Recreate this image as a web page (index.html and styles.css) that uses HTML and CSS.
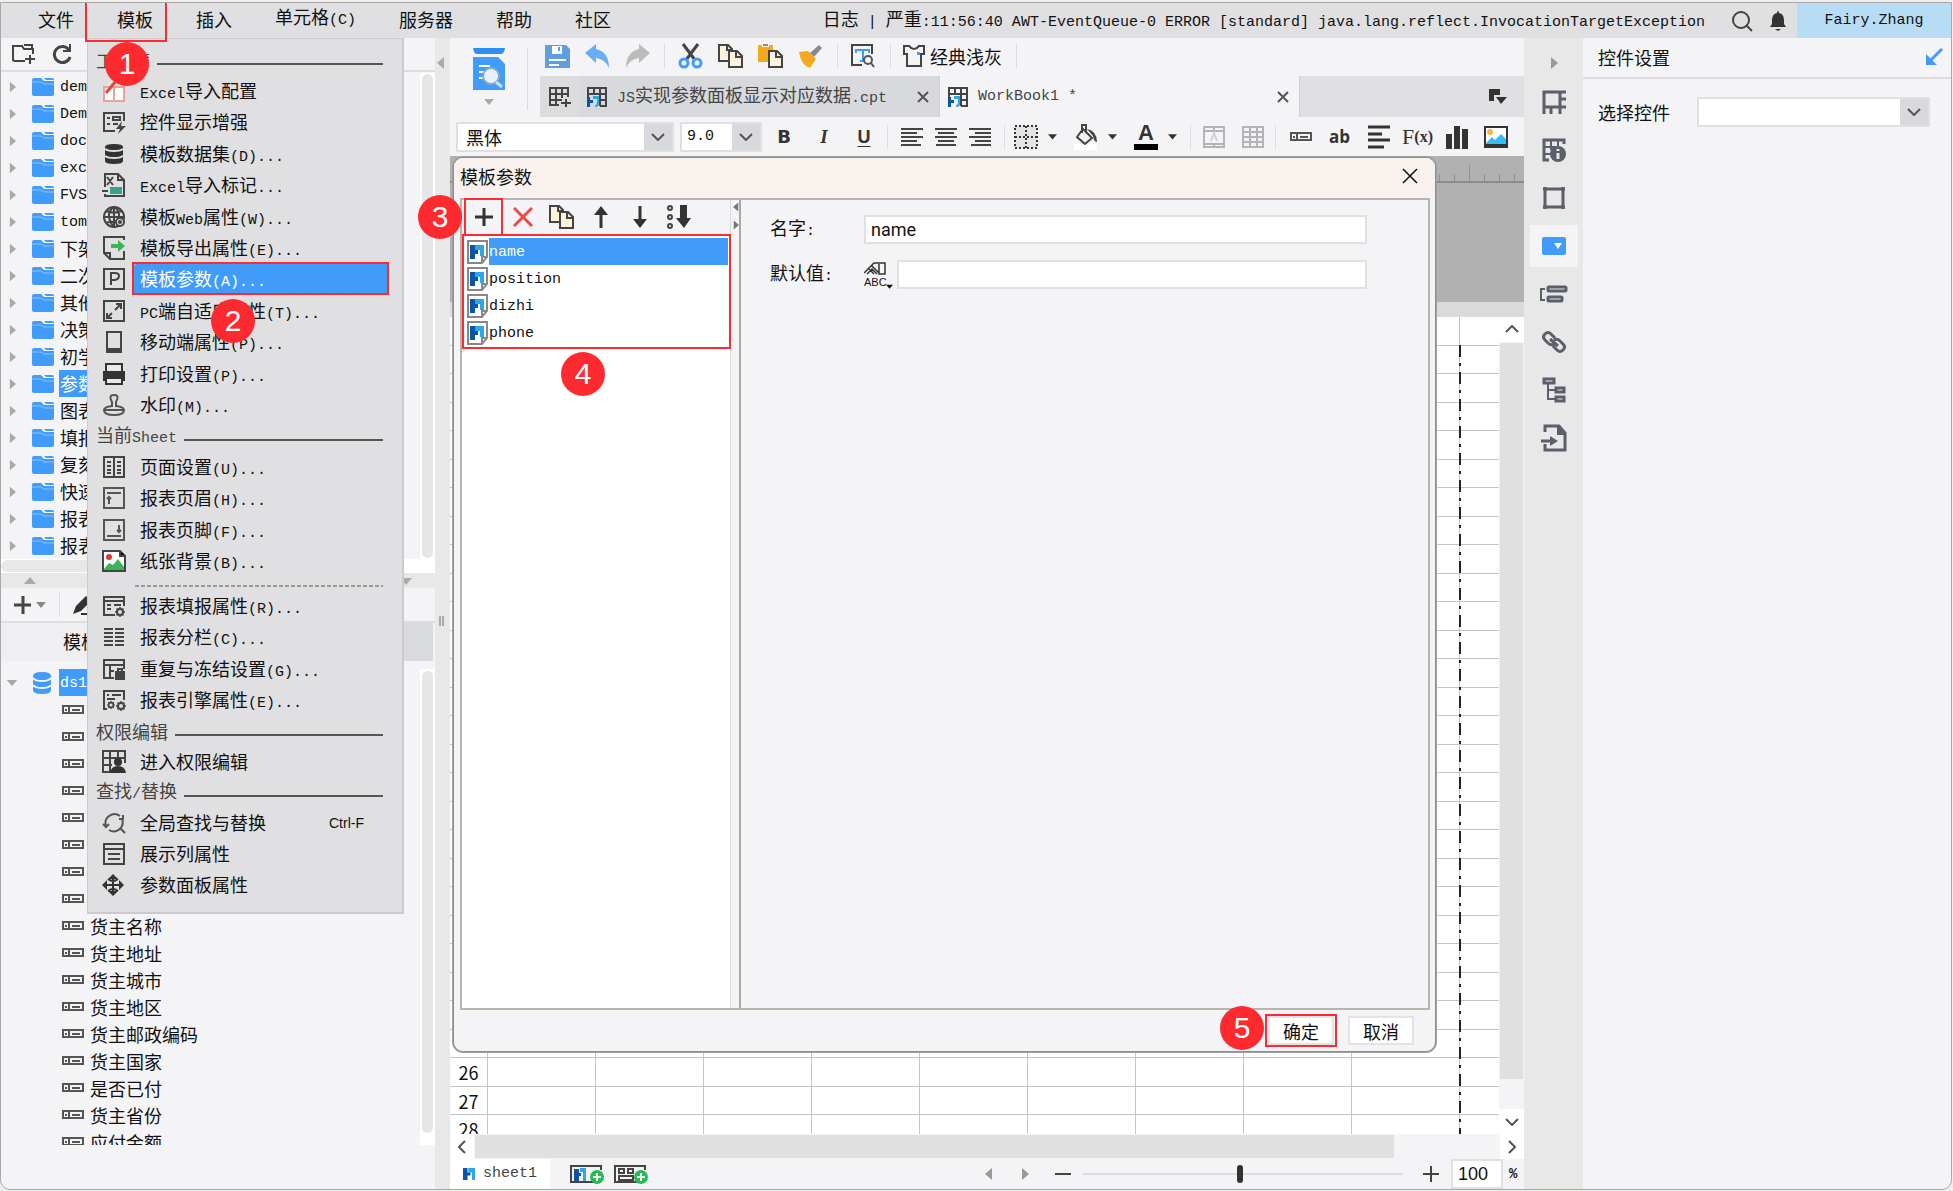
FILE: index.html
```html
<!DOCTYPE html>
<html lang="zh-CN">
<head>
<meta charset="utf-8">
<title>报表设计器</title>
<link rel="stylesheet" href="styles.css">
</head>
<body>
<svg class="defs" aria-hidden="true">
  <symbol id="tri-r" viewBox="0 0 8 12"><path d="M1 0l7 6-7 6z" fill="currentColor"/></symbol>
  <symbol id="tri-d" viewBox="0 0 12 8"><path d="M0 1h12L6 8z" fill="currentColor"/></symbol>
  <symbol id="chev" viewBox="0 0 14 8"><path d="M1 1l6 6 6-6" fill="none" stroke="#555" stroke-width="2"/></symbol>
  <symbol id="folder" viewBox="0 0 22 18"><path d="M0 2q0-2 2-2h7l3 3h10v13q0 2-2 2H2q-2 0-2-2z" fill="#419bf9"/><path d="M12 0h8q2 0 2 2H14z" fill="#419bf9"/><path d="M0 4h9l3 2h10" fill="none" stroke="#8cc4fc"/></symbol>
  <symbol id="field" viewBox="0 0 22 10"><path d="M1 1h20v7H1zM7 1v7M10 5h8M3 5h2" fill="none" stroke="#555" stroke-width="2"/></symbol>
  <symbol id="pages" viewBox="0 0 25 24"><path d="M1 1h9l4 4v12H1z" fill="#fdf3dc" stroke="#444" stroke-width="2"/><path d="M11 7h8l5 5v11H11z" fill="#fdf3dc" stroke="#444" stroke-width="2"/><path d="M18 7v6h6M9 1v5h5" fill="none" stroke="#444" stroke-width="2"/></symbol>
  <symbol id="logo" viewBox="0 0 16 16"><path d="M0 0h6v6h4v4H6v6H0z" fill="#0a55a5"/><path d="M7 0h9v16h-4V6H7z" fill="#2ea7e6"/></symbol>
  <symbol id="book" viewBox="0 0 20 20"><path d="M1 10V1h18v18h-6M1 7h18M7 1v7M13 1v18M13 13h6" fill="none" stroke="#444" stroke-width="2"/><path d="M0 10h3v3h3v3H3v4H0z" fill="#0a55a5"/><path d="M6 9h6v8q0 3-4 3v-2q2 0 2-2v-4H6z" fill="#2ea7e6"/></symbol>
  <symbol id="param" viewBox="0 0 21 24"><path d="M1 1h19v16l-5 6H1z" fill="#fff" stroke="#888" stroke-width="2"/><path d="M20 17h-5v6" fill="none" stroke="#888" stroke-width="2"/><path d="M3 5h5v5h3v4H8v5H3z" fill="#0a55a5"/><path d="M8 5h9v11h-4v-6H8z" fill="#2ea7e6"/></symbol>
  <symbol id="gear" viewBox="0 0 10 10"><circle cx="5" cy="5" r="3" fill="none" stroke="#444" stroke-width="2"/><path d="M5 0v2M5 8v2M0 5h2M8 5h2M1.500 1.500l1.500 1.500M7 7l1.500 1.500M1.500 8.500L3 7M7 3l1.500-1.500" stroke="#444" stroke-width="1.500"/></symbol>
</svg>
<div class="app">
  <header class="menubar">
    <nav class="menus">
      <button>文件</button><button class="marked current">模板</button><button>插入</button><button><span>单元格<span class="m">(C)</span></span></button><button>服务器</button><button>帮助</button><button>社区</button>
    </nav>
    <p class="log">日志<span class="m"> | </span>严重<span class="m">:11:56:40 AWT-EventQueue-0 ERROR [standard] java.lang.reflect.InvocationTargetException</span></p>
    <button class="tool-search" aria-label="搜索"><svg width="22" height="22" viewBox="0 0 22 22" fill="none" stroke="#444" stroke-width="2"><circle cx="10" cy="10" r="8"/><path d="M15 15l6 6"/></svg></button>
    <button class="tool-bell" aria-label="通知"><svg width="16" height="20" viewBox="0 0 16 20" fill="#333"><path d="M8 0q1 0 1 2 5 1 5 7v4l2 3H0l2-3V9q0-6 5-7 0-2 1-2zM5 18h6l-3 2z"/></svg></button>
    <button class="user m">Fairy.Zhang</button>
  </header>

  <div class="workspace">
    <aside class="left">
      <div class="left-tools">
        <button aria-label="新建文件夹"><svg width="24" height="20" viewBox="0 0 24 20" fill="none" stroke="#444" stroke-width="2"><path d="M13 17H3q-1 0-2-1V2h9l2 3h9v5M12 1h8v4M18 11v9M13 15h10"/></svg></button>
        <button aria-label="刷新"><svg width="20" height="20" viewBox="0 0 20 20" fill="none" stroke="#444" stroke-width="3"><path d="M17 6A8 8 0 1 0 18 13"/><path d="M18 0v7h-7" stroke-width="2"/></svg></button>
      </div>
      <div class="pane files">
        <ul class="tree">
          <li><svg class="arrow"><use href="#tri-r"/></svg><svg class="fold"><use href="#folder"/></svg><span class="lat">dem</span></li>
          <li><svg class="arrow"><use href="#tri-r"/></svg><svg class="fold"><use href="#folder"/></svg><span class="lat">Dem</span></li>
          <li><svg class="arrow"><use href="#tri-r"/></svg><svg class="fold"><use href="#folder"/></svg><span class="lat">doc</span></li>
          <li><svg class="arrow"><use href="#tri-r"/></svg><svg class="fold"><use href="#folder"/></svg><span class="lat">exc</span></li>
          <li><svg class="arrow"><use href="#tri-r"/></svg><svg class="fold"><use href="#folder"/></svg><span class="lat">FVS</span></li>
          <li><svg class="arrow"><use href="#tri-r"/></svg><svg class="fold"><use href="#folder"/></svg><span class="lat">tom</span></li>
          <li><svg class="arrow"><use href="#tri-r"/></svg><svg class="fold"><use href="#folder"/></svg><span>下架</span></li>
          <li><svg class="arrow"><use href="#tri-r"/></svg><svg class="fold"><use href="#folder"/></svg><span>二次</span></li>
          <li><svg class="arrow"><use href="#tri-r"/></svg><svg class="fold"><use href="#folder"/></svg><span>其他</span></li>
          <li><svg class="arrow"><use href="#tri-r"/></svg><svg class="fold"><use href="#folder"/></svg><span>决策</span></li>
          <li><svg class="arrow"><use href="#tri-r"/></svg><svg class="fold"><use href="#folder"/></svg><span>初学</span></li>
          <li><svg class="arrow"><use href="#tri-r"/></svg><svg class="fold"><use href="#folder"/></svg><span class="sel">参数</span></li>
          <li><svg class="arrow"><use href="#tri-r"/></svg><svg class="fold"><use href="#folder"/></svg><span>图表</span></li>
          <li><svg class="arrow"><use href="#tri-r"/></svg><svg class="fold"><use href="#folder"/></svg><span>填报</span></li>
          <li><svg class="arrow"><use href="#tri-r"/></svg><svg class="fold"><use href="#folder"/></svg><span>复刻</span></li>
          <li><svg class="arrow"><use href="#tri-r"/></svg><svg class="fold"><use href="#folder"/></svg><span>快速</span></li>
          <li><svg class="arrow"><use href="#tri-r"/></svg><svg class="fold"><use href="#folder"/></svg><span>报表</span></li>
          <li><svg class="arrow"><use href="#tri-r"/></svg><svg class="fold"><use href="#folder"/></svg><span>报表</span></li>
        </ul>
        <div class="vbar"><i></i></div>
      </div>
      <div class="hbar"><i></i></div>
      <div class="hsplit"><svg class="up"><use href="#tri-d"/></svg><svg><use href="#tri-d"/></svg></div>
      <div class="data-tools">
        <button aria-label="添加"><svg width="32" height="18" viewBox="0 0 32 18"><path d="M0 9h17M9 0v18" stroke="#444" stroke-width="3"/><path d="M22 6h10l-5 6z" fill="#888"/></svg></button>
        <i class="sep"></i>
        <button aria-label="编辑"><svg width="22" height="20" viewBox="0 0 22 20"><path d="M0 19l3-8L13 1l5 5L8 16z" fill="#333"/><path d="M8 19h14" stroke="#333" stroke-width="2"/></svg></button>
      </div>
      <div class="data-tabs"><span>模板</span></div>
      <div class="pane data">
        <ul class="tree">
          <li><svg class="arrow-d"><use href="#tri-d"/></svg><svg class="db" viewBox="0 0 18 22"><path d="M0 4q0-4 9-4t9 4v14q0 4-9 4t-9-4z" fill="#419bf9"/><path d="M0 6q2 3 9 3t9-3M0 13q2 3 9 3t9-3" fill="none" stroke="#f4f4f7" stroke-width="2"/></svg><span class="sel lat">ds1</span></li>
          <li class="col"><svg><use href="#field"/></svg></li>
          <li class="col"><svg><use href="#field"/></svg></li>
          <li class="col"><svg><use href="#field"/></svg></li>
          <li class="col"><svg><use href="#field"/></svg></li>
          <li class="col"><svg><use href="#field"/></svg></li>
          <li class="col"><svg><use href="#field"/></svg></li>
          <li class="col"><svg><use href="#field"/></svg></li>
          <li class="col"><svg><use href="#field"/></svg></li>
          <li class="col"><svg><use href="#field"/></svg>货主名称</li>
          <li class="col"><svg><use href="#field"/></svg>货主地址</li>
          <li class="col"><svg><use href="#field"/></svg>货主城市</li>
          <li class="col"><svg><use href="#field"/></svg>货主地区</li>
          <li class="col"><svg><use href="#field"/></svg>货主邮政编码</li>
          <li class="col"><svg><use href="#field"/></svg>货主国家</li>
          <li class="col"><svg><use href="#field"/></svg>是否已付</li>
          <li class="col"><svg><use href="#field"/></svg>货主省份</li>
          <li class="col"><svg><use href="#field"/></svg>应付金额</li>
        </ul>
        <div class="vbar"><i></i></div>
      </div>
    </aside>

    <div class="vsplit"><svg class="flip" width="8" height="14" viewBox="0 0 8 12"><use href="#tri-r"/></svg><i></i></div>

    <main class="main">
      <div class="top">
        <button class="preview" aria-label="预览"><svg width="34" height="58" viewBox="0 0 34 58"><path d="M1 0h32q-1 6-4 6H5Q2 6 1 0z" fill="#2f8ff0"/><path d="M1 9h25l7 7v26H1z" fill="#419bf9"/><path d="M7 18h11M7 24h6M7 30h5" stroke="#fff" stroke-width="2"/><circle cx="19" cy="28" r="8" fill="#e4f2ff" stroke="#8ab" stroke-width="2"/><path d="M24 34l6 5" stroke="#cde" stroke-width="3"/><path d="M12 51h10l-5 6z" fill="#aaa"/></svg></button>
        <div class="top-rows">
          <div class="tools">
            <button aria-label="保存"><svg width="25" height="25" viewBox="0 0 25 25"><path d="M0 1h21l4 4v19H0z" fill="#5f9fe0"/><path d="M7 2h10v8H7z" fill="#fff"/><path d="M13 3h2v4h-2z" fill="#5f9fe0"/><path d="M4 16h17M4 21h10" stroke="#fff" stroke-width="2"/></svg></button>
            <button aria-label="撤销"><svg width="25" height="24" viewBox="0 0 25 24"><path d="M0 9L11 0v5q13 3 13 19-4-9-13-10v5z" fill="#6aaef5"/></svg></button>
            <button aria-label="重做"><svg width="25" height="24" viewBox="0 0 25 24"><path d="M25 9L14 0v5Q1 8 1 24q4-9 13-10v5z" fill="#bbb"/></svg></button>
            <i class="sep"></i>
            <button aria-label="剪切"><svg width="25" height="26" viewBox="0 0 25 26" fill="none"><path d="M5 1l12 16M20 1L8 17" stroke="#444" stroke-width="3"/><circle cx="6" cy="20" r="4" stroke="#419bf9" stroke-width="3"/><circle cx="19" cy="20" r="4" stroke="#419bf9" stroke-width="3"/></svg></button>
            <button aria-label="复制"><svg width="25" height="24"><use href="#pages"/></svg></button>
            <button aria-label="粘贴"><svg width="25" height="26" viewBox="0 0 25 26"><path d="M0 2h15v17H0z" fill="#f2a91c"/><path d="M4 0h7v4H4z" fill="#fff"/><path d="M5 1h5v2H5z" fill="#e66b2e"/><path d="M11 8h8l5 5v11H11z" fill="#fdf3dc" stroke="#444" stroke-width="2"/><path d="M18 8v6h6" fill="none" stroke="#444" stroke-width="2"/></svg></button>
            <button aria-label="格式刷"><svg width="25" height="24" viewBox="0 0 25 24"><path d="M12 9L21 1l3 3-8 9z" fill="#889"/><path d="M1 8l9-1 8 8-6 9Q3 21 1 8z" fill="#f2a91c"/></svg></button>
            <i class="sep"></i>
            <button aria-label="查看文本"><svg width="24" height="24" viewBox="0 0 24 24" fill="none"><path d="M11 21H1V1h20v9" stroke="#444" stroke-width="2"/><path d="M5 6h13M12 6v12M5 5v4M18 5v4M9 17h4" stroke="#419bf9" stroke-width="2"/><circle cx="17" cy="16" r="4" stroke="#555" stroke-width="2"/><path d="M20 19l3 4" stroke="#555" stroke-width="2"/></svg></button>
            <i class="sep"></i>
            <button class="theme"><svg width="22" height="22" viewBox="0 0 22 22"><path d="M1 1h5q5 6 10 0h5v8h-3v12H4V9H1z" fill="none" stroke="#444" stroke-width="2"/><path d="M14 7h3v3h-3z" fill="#419bf9"/></svg>经典浅灰</button>
            <i class="sep"></i>
          </div>
          <div class="tabs">
            <button class="newtab" aria-label="新建模板"><svg width="22" height="20" viewBox="0 0 22 20" fill="none" stroke="#444" stroke-width="2"><path d="M10 18H1V1h18v9M1 7h18M1 13h12M7 1v17M13 1v10M17 12v8M12 16h10"/></svg></button>
            <div class="tab"><svg width="20" height="20"><use href="#book"/></svg><span class="name"><span class="m">JS</span>实现参数面板显示对应数据<span class="m">.cpt</span></span><button aria-label="关闭"><svg width="12" height="12" viewBox="0 0 12 12"><path d="M1 1l10 10M11 1L1 11" stroke="#555" stroke-width="2"/></svg></button></div>
            <div class="tab active"><svg width="20" height="20"><use href="#book"/></svg><span class="name m">WorkBook1 *</span><button aria-label="关闭"><svg width="12" height="12" viewBox="0 0 12 12"><path d="M1 1l10 10M11 1L1 11" stroke="#555" stroke-width="2"/></svg></button></div>
            <button class="tablist" aria-label="标签列表"><svg width="20" height="16" viewBox="0 0 20 16" fill="#333"><path d="M1 0h11v6H6v6H1zM8 8h11l-6 7z"/></svg></button>
          </div>
        </div>
      </div>

      <div class="format">
        <div class="combo font"><select aria-label="字体"><option>黑体</option></select><svg><use href="#chev"/></svg></div>
        <div class="combo size"><select aria-label="字号" class="m"><option>9.0</option></select><svg><use href="#chev"/></svg></div>
        <div class="group biu"><button class="b">B</button><button class="it">I</button><button class="u">U</button></div>
        <i class="sep"></i>
        <div class="group al">
          <button aria-label="左对齐"><svg width="22" height="18" viewBox="0 0 22 18" stroke="#444" stroke-width="2"><path d="M0 1h22M0 5h16M0 9h22M0 13h16M0 17h20"/></svg></button>
          <button aria-label="居中"><svg width="22" height="18" viewBox="0 0 22 18" stroke="#444" stroke-width="2"><path d="M0 1h22M3 5h16M0 9h22M3 13h16M1 17h20"/></svg></button>
          <button aria-label="右对齐"><svg width="22" height="18" viewBox="0 0 22 18" stroke="#444" stroke-width="2"><path d="M0 1h22M6 5h16M0 9h22M6 13h16M2 17h20"/></svg></button>
        </div>
        <i class="sep"></i>
        <div class="group drops">
          <button aria-label="边框"><svg width="24" height="26" viewBox="0 0 24 26"><path d="M1 2h22v22H1zM12 2v22M1 13h22" fill="#e4e4e6" stroke="#333" stroke-width="2" stroke-dasharray="2 2"/></svg><svg class="caret"><use href="#tri-d"/></svg></button>
          <button aria-label="填充"><svg width="24" height="26" viewBox="0 0 24 26"><path d="M0 20h23v6H0z" fill="#fff"/><path d="M9 5l9 9-7 6-8-7zM8 9V1h4v7" fill="none" stroke="#444" stroke-width="2"/><path d="M13 5q10 2 10 13-3 0-4-6z" fill="#444"/></svg><svg class="caret"><use href="#tri-d"/></svg></button>
          <button aria-label="文字颜色"><span class="fa">A</span><svg class="caret"><use href="#tri-d"/></svg></button>
        </div>
        <i class="sep"></i>
        <div class="group cells">
          <button aria-label="合并单元格"><svg width="22" height="22" viewBox="0 0 22 22" fill="none" stroke="#b4b4b6" stroke-width="2"><path d="M1 1h20v20H1zM1 5h20M1 18h20M11 1v4M11 18v3"/><path d="M8 15l3-8 3 8" stroke="#d0d0d2"/></svg></button>
          <button aria-label="取消合并"><svg width="22" height="22" viewBox="0 0 22 22" fill="none" stroke="#b4b4b6" stroke-width="2"><path d="M1 1h20v20H1zM1 6h20M1 11h20M1 16h20M8 1v20M15 1v20"/></svg></button>
        </div>
        <i class="sep"></i>
        <div class="group cells last">
          <button aria-label="数据列"><svg width="22" height="10"><use href="#field"/></svg></button>
          <button class="ab">ab</button>
          <button aria-label="富文本"><svg width="22" height="24" viewBox="0 0 22 24" stroke="#333" stroke-width="3"><path d="M0 2h22M0 9h14M0 15h22M0 22h16"/></svg></button>
          <button class="fx">F<small>(x)</small></button>
          <button aria-label="图表"><svg width="22" height="24" viewBox="0 0 22 24" fill="#333"><path d="M0 9h6v15H0zM8 1h6v23H8zM16 4h6v20h-6z"/></svg></button>
          <button aria-label="图片"><svg width="24" height="22" viewBox="0 0 24 22"><path d="M1 1h22v20H1z" fill="#fff" stroke="#333" stroke-width="2"/><path d="M2 17l6-6 3 3 6-6 5 5v5H2z" fill="#36bdf5"/><path d="M1 18h22v3H1z" fill="#333"/><circle cx="6" cy="6" r="3" fill="#f6b53c"/></svg></button>
        </div>
      </div>

      <div class="canvas">
        <div class="ruler"></div>
        <div class="param-area"></div>
        <div class="param-edge"></div>
        <div class="sheet-wrap">
          <div class="sheet"><table id="grid"></table><i class="page-edge"></i></div>
          <div class="sheet-bar"><button aria-label="向上" class="flipv"><svg><use href="#chev"/></svg></button><i></i><button aria-label="向下"><svg><use href="#chev"/></svg></button></div>
        </div>

        <section class="dialog" role="dialog" aria-labelledby="dlg-title">
          <div class="dlg-title"><h2 id="dlg-title">模板参数</h2><button aria-label="关闭"><svg width="16" height="16" viewBox="0 0 16 16"><path d="M1 1l14 14M15 1L1 15" stroke="#111" stroke-width="1.500"/></svg></button></div>
          <div class="dlg-body">
            <div class="params">
              <div class="param-tools">
                <button class="marked" aria-label="添加参数"><svg width="18" height="18" viewBox="0 0 18 18"><path d="M0 9h18M9 0v18" stroke="#333" stroke-width="3"/></svg></button>
                <button aria-label="删除参数"><svg width="20" height="20" viewBox="0 0 20 20"><path d="M1 1l18 18M19 1L1 19" stroke="#ee4848" stroke-width="3"/></svg></button>
                <button aria-label="复制参数"><svg width="25" height="24"><use href="#pages"/></svg></button>
                <button aria-label="上移"><svg width="16" height="22" viewBox="0 0 16 22"><path d="M8 22V5" stroke="#333" stroke-width="3"/><path d="M8 0l7 9H1z" fill="#333"/></svg></button>
                <button aria-label="下移"><svg width="16" height="22" viewBox="0 0 16 22"><path d="M8 0v17" stroke="#333" stroke-width="3"/><path d="M8 22l7-9H1z" fill="#333"/></svg></button>
                <button aria-label="排序"><svg width="24" height="24" viewBox="0 0 24 24"><path d="M13 0h7v13h4l-7 10-8-10h4z" fill="#333"/><g fill="none" stroke="#444" stroke-width="2"><circle cx="3" cy="3" r="2"/><circle cx="3" cy="12" r="2"/><circle cx="3" cy="21" r="2"/></g></svg></button>
              </div>
              <div class="param-list">
                <ul class="marked">
                  <li class="on"><svg><use href="#param"/></svg><span>name</span></li>
                  <li><svg><use href="#param"/></svg><span>position</span></li>
                  <li><svg><use href="#param"/></svg><span>dizhi</span></li>
                  <li><svg><use href="#param"/></svg><span>phone</span></li>
                </ul>
                <b class="badge badge-4">4</b>
              </div>
              <b class="badge badge-3">3</b>
            </div>
            <div class="dlg-split"><svg class="flip" viewBox="0 0 8 12"><use href="#tri-r"/></svg><svg viewBox="0 0 8 12"><use href="#tri-r"/></svg></div>
            <form class="detail">
              <label for="p-name">名字<span class="m">:</span></label><input id="p-name" value="name">
              <label for="p-def">默认值<span class="m">:</span></label>
              <div class="def"><button type="button" aria-label="类型"><svg width="22" height="14" viewBox="0 0 22 14" fill="none" stroke="#333" stroke-width="1.500"><path d="M0 11L10 1h11v11h-6V2M3 12l5-5 5 5M8 4l7 7M5 7l5 5"/></svg><span>ABC</span><svg class="mini"><use href="#tri-d"/></svg></button><input id="p-def"></div>
            </form>
          </div>
          <footer><b class="badge">5</b><button class="marked">确定</button><button>取消</button></footer>
        </section>
      </div>

      <div class="sheet-hbar"><button aria-label="向左"><svg class="rot-l"><use href="#chev"/></svg></button><i></i><button aria-label="向右"><svg class="rot-r"><use href="#chev"/></svg></button></div>
      <div class="status">
        <button class="sheet-tab"><svg width="12" height="14" viewBox="0 0 16 16"><use href="#logo"/></svg><span class="m">sheet1</span></button>
        <button aria-label="新建报表"><svg width="34" height="20" viewBox="0 0 34 20"><path d="M25 18H1V2h30v4" fill="none" stroke="#444" stroke-width="2"/><path d="M4 5h5v4h2v3H9v5H4z" fill="#0a55a5"/><path d="M10 4h6v13h-3V8h-3z" fill="#2ea7e6"/><circle cx="27" cy="13" r="7" fill="#25bb55"/><path d="M23 13h8M27 9v8" stroke="#fff" stroke-width="2"/></svg></button>
        <button aria-label="新建聚合块"><svg width="34" height="20" viewBox="0 0 34 20"><path d="M25 18H1V2h30v4M5 5h5v4H5zM14 5h5v4h-5zM5 12h14v4H5z" fill="none" stroke="#444" stroke-width="2"/><circle cx="27" cy="13" r="7" fill="#25bb55"/><path d="M23 13h8M27 9v8" stroke="#fff" stroke-width="2"/></svg></button>
        <span class="grow"></span>
        <button class="pg" aria-label="上一页"><svg class="flip" width="8" height="12"><use href="#tri-r"/></svg></button>
        <button class="pg" aria-label="下一页"><svg width="8" height="12"><use href="#tri-r"/></svg></button>
        <button class="zo" aria-label="缩小"><svg width="16" height="16" viewBox="0 0 16 16"><path d="M0 8h16" stroke="#444" stroke-width="2"/></svg></button>
        <input type="range" aria-label="缩放" min="0" max="100" value="49">
        <button class="zi" aria-label="放大"><svg width="16" height="16" viewBox="0 0 16 16"><path d="M0 8h16M8 0v16" stroke="#444" stroke-width="2"/></svg></button>
        <input class="zoom" id="zoom" value="100"><label for="zoom">%</label>
      </div>
    </main>

    <nav class="strip">
      <button class="fold-btn" aria-label="收起"><svg width="8" height="14"><use href="#tri-r"/></svg></button>
      <button aria-label="单元格元素"><svg width="24" height="24" viewBox="0 0 24 24" fill="none" stroke="#5b5f6b" stroke-width="3"><path d="M2 24V2h22M2 17h22M18 2v22M18 9h6M9 17v7"/></svg></button>
      <button aria-label="单元格属性"><svg width="24" height="24" viewBox="0 0 24 24" fill="none" stroke="#5b5f6b"><path d="M7 22H2V2h20v4" stroke-width="3"/><path d="M3 9h11M3 16h5M9 3v9M16 3v5" stroke-width="2"/><circle cx="16" cy="16" r="8" fill="#5b5f6b" stroke="none"/><path d="M16 15v6M16 11v2" stroke="#e8e8e8" stroke-width="3"/></svg></button>
      <button aria-label="悬浮元素"><svg width="24" height="24" viewBox="0 0 24 24" fill="none" stroke="#5b5f6b" stroke-width="3"><path d="M3 3h18v18H3z"/><path d="M1 3h4M19 3h4M1 21h4M19 21h4M3 1v3M21 1v3M3 20v3M21 20v3"/></svg></button>
      <button class="active" aria-label="控件设置"><svg width="24" height="18" viewBox="0 0 24 18"><rect width="24" height="18" rx="2" fill="#419bf9"/><path d="M12 6h8l-4 6z" fill="#fff"/></svg></button>
      <button aria-label="条件属性"><svg width="28" height="18" viewBox="0 0 28 18" fill="none" stroke="#5b5f6b" stroke-width="3"><rect x="8" y="2" width="18" height="4" rx="1"/><rect x="8" y="12" width="14" height="4" rx="1"/><path d="M5 4H1v11h4" stroke-width="2"/></svg></button>
      <button aria-label="超级链接"><svg width="24" height="24" viewBox="0 0 24 24" fill="none" stroke="#5b5f6b" stroke-width="3"><path d="M13 8L9 4Q6 1 3 4t0 6l3 3q3 3 6 1M11 16l4 4q3 3 6 0t0-6l-3-3q-3-3-6-1M8 9l8 7"/></svg></button>
      <button aria-label="组件结构"><svg width="24" height="26" viewBox="0 0 24 26" fill="none" stroke="#5b5f6b"><path d="M2 2h10v4H2zM14 11h8v4h-8zM14 20h8v4h-8z" stroke-width="3"/><path d="M6 7v15h7M6 13h7" stroke-width="2"/></svg></button>
      <button aria-label="导出"><svg width="28" height="28" viewBox="0 0 28 28"><path d="M5 8V2h14l6 7v17H5v-6" fill="none" stroke="#5b5f6b" stroke-width="3"/><path d="M17 2h3l6 7v2h-9z" fill="#5b5f6b"/><path d="M1 17h11" stroke="#5b5f6b" stroke-width="3"/><path d="M10 12l8 5-8 5z" fill="#5b5f6b"/></svg></button>
    </nav>

    <aside class="right">
      <div class="right-head"><h2>控件设置</h2><button aria-label="停靠"><svg width="18" height="18" viewBox="0 0 18 18"><path d="M17 1L6 12" stroke="#419bf9" stroke-width="3"/><path d="M1 6l11 11H1z" fill="#419bf9"/></svg></button></div>
      <div class="right-row"><label for="widget">选择控件</label><div class="combo"><select id="widget"><option></option></select><svg><use href="#chev"/></svg></div></div>
    </aside>
  </div>

  <div class="popup">
    <h3>工作簿</h3>
    <div class="items g11">
      <button><svg viewBox="0 0 24 24"><path d="M2 8h20v14H2z" fill="#fff" stroke="#e9a19b" stroke-width="2"/><path d="M12 9v12" stroke="#e9a19b" stroke-width="2"/><path d="M4 14L14 2" stroke="#e2483b" stroke-width="3"/></svg><span><span class="m">Excel</span>导入配置</span></button>
      <button><svg viewBox="0 0 24 24" fill="none" stroke="#444" stroke-width="2"><path d="M13 21H2V3h20v8M5 8h3M5 14h3M11 7h7v3h-7zM11 14h5"/><path d="M20 11l-6 8h4l-2 5 8-8h-5z" fill="#444" stroke="none"/></svg><span>控件显示增强</span></button>
      <button><svg viewBox="0 0 24 24"><path d="M3 5q0-3 9-3t9 3v14q0 3-9 3t-9-3z" fill="#333"/><path d="M3 7q3 2 9 2t9-2M3 14q3 2 9 2t9-2" fill="none" stroke="#e0e0e2" stroke-width="2"/></svg><span>模板数据集<span class="m">(D)...</span></span></button>
      <button><svg viewBox="0 0 24 24" fill="none" stroke="#444" stroke-width="2"><path d="M3 14V1h13l6 6v16H3v-2M16 1v6h6M5 4l6 8M11 4l-6 8M0 18h6"/><path d="M9 15h10v5H9z" fill="#35a38b" stroke="#35a38b"/></svg><span><span class="m">Excel</span>导入标记<span class="m">...</span></span></button>
      <button><svg viewBox="0 0 24 24" fill="none" stroke="#444" stroke-width="2"><circle cx="12" cy="12" r="10"/><path d="M2 12h20M12 2v20M4 6q8 3 16 0M4 18q5-2 8-1M12 2q-6 4-5 10t5 10M12 2q6 3 5 10"/><circle cx="18" cy="17" r="4" fill="#e0e0e2"/><circle cx="18" cy="17" r="1"/></svg><span>模板<span class="m">Web</span>属性<span class="m">(W)...</span></span></button>
      <button><svg viewBox="0 0 24 24"><path d="M22 4V1H2v16l6 6h14V15M2 17h6v6" fill="none" stroke="#444" stroke-width="2"/><path d="M9 8h7V4l7 6-7 6v-4H9z" fill="#3bb455"/></svg><span>模板导出属性<span class="m">(E)...</span></span></button>
      <button class="picked"><svg viewBox="0 0 24 24" fill="none" stroke="#444" stroke-width="2"><path d="M2 2h20v20H2zM9 18V6h4q4 0 4 3t-4 4H9"/></svg><span>模板参数<span class="m">(A)...</span></span></button>
      <button><svg viewBox="0 0 24 24" fill="none" stroke="#444" stroke-width="2"><path d="M2 2h20v20H2zM14 5h5v5M19 5l-6 6M10 19H5v-5M5 19l5-5"/></svg><span><span class="m">PC</span>端自适应属性<span class="m">(T)...</span></span></button>
      <button><svg viewBox="0 0 24 24"><path d="M5 2h14v20H5z" fill="none" stroke="#444" stroke-width="2"/><path d="M5 18h14v4H5z" fill="#444"/></svg><span>移动端属性<span class="m">(P)...</span></span></button>
      <button><svg viewBox="0 0 24 24"><path d="M1 9h22v10H1z" fill="#333"/><path d="M4 2h16v8H4zM4 16h16v6H4z" fill="#e8e8ea" stroke="#333" stroke-width="2"/></svg><span>打印设置<span class="m">(P)...</span></span></button>
      <button><svg viewBox="0 0 24 24" fill="none" stroke="#555" stroke-width="2"><path d="M10 13V9q-4-7 2-7t2 7v4q8 1 8 4H2q0-3 8-4zM2 17q0 5 10 5t10-5"/></svg><span>水印<span class="m">(M)...</span></span></button>
    </div>
    <h3><span>当前<span class="m">Sheet</span></span></h3>
    <div class="items g4">
      <button><svg viewBox="0 0 24 24" fill="none" stroke="#444" stroke-width="2"><path d="M2 2h20v20H2zM12 2v20M5 7h4M5 11h4M5 15h4M5 18h4M15 7h4M15 11h4M15 15h4M15 18h4"/></svg><span>页面设置<span class="m">(U)...</span></span></button>
      <button><svg viewBox="0 0 24 24" fill="none" stroke="#555" stroke-width="2"><path d="M2 2h20v20H2zM5 7h14M7 11v7M5 13l2-2 2 2"/></svg><span>报表页眉<span class="m">(H)...</span></span></button>
      <button><svg viewBox="0 0 24 24" fill="none" stroke="#555" stroke-width="2"><path d="M2 2h20v20H2zM5 18h14M17 7v7M15 12l2 2 2-2"/></svg><span>报表页脚<span class="m">(F)...</span></span></button>
      <button><svg viewBox="0 0 24 24"><path d="M1 2h17l5 5v15H1z" fill="#fff" stroke="#444" stroke-width="2"/><path d="M18 2v5h5" stroke="#444" stroke-width="2"/><path d="M2 20l5-6 4 2 5-6 6 8v3H2z" fill="#3bb455"/><circle cx="7" cy="8" r="3" fill="#e8323b"/></svg><span>纸张背景<span class="m">(B)...</span></span></button>
    </div>
    <hr>
    <div class="items g4">
      <button><svg viewBox="0 0 24 24" fill="none" stroke="#444" stroke-width="2"><path d="M13 21H2V3h20v9M2 7h20M5 11h4M5 15h4M12 11h7"/><use href="#gear" x="13" y="13" width="10" height="10"/></svg><span>报表填报属性<span class="m">(R)...</span></span></button>
      <button><svg viewBox="0 0 24 24" fill="none" stroke="#444" stroke-width="2"><path d="M2 4h9M2 8h9M2 12h9M2 16h9M2 20h9M13 4h9M13 8h9M13 12h9M13 16h9M13 20h9"/></svg><span>报表分栏<span class="m">(C)...</span></span></button>
      <button><svg viewBox="0 0 24 24" fill="none" stroke="#444" stroke-width="2"><path d="M12 21H2V3h20v9M2 8h20M8 8v13M8 14h4"/><path d="M14 15h8v7h-8z" fill="#444"/><path d="M16 15v-3h4v3"/></svg><span>重复与冻结设置<span class="m">(G)...</span></span></button>
      <button><svg viewBox="0 0 24 24" fill="none" stroke="#444" stroke-width="2"><path d="M5 21H2V3h20v9M5 7h2M10 7h9M5 11h8"/><use href="#gear" x="5" y="13" width="8" height="8"/><use href="#gear" x="14" y="13" width="10" height="10"/></svg><span>报表引擎属性<span class="m">(E)...</span></span></button>
    </div>
    <h3>权限编辑</h3>
    <div class="items g1">
      <button><svg viewBox="0 0 24 24"><path d="M10 22H1V1h22v12M1 8h22M1 15h9M8 1v21M16 1v6" fill="none" stroke="#444" stroke-width="2"/><circle cx="16" cy="12" r="4" fill="#333"/><path d="M8 23q1-7 8-7t8 7z" fill="#333"/></svg><span>进入权限编辑</span></button>
    </div>
    <h3><span>查找<span class="m">/</span>替换</span></h3>
    <div class="items g3">
      <button><svg viewBox="0 0 24 24" fill="none" stroke="#555" stroke-width="2"><path d="M4 15A9 9 0 0 1 18 5M20 8A9 9 0 0 1 7 19M18 17l5 5M1 13l3 3 3-3M17 8h4V4"/></svg><span>全局查找与替换</span><kbd>Ctrl-F</kbd></button>
      <button><svg viewBox="0 0 24 24" fill="none" stroke="#444" stroke-width="2"><path d="M2 2h20v20H2zM2 7h20M6 12h12M6 17h12"/></svg><span>展示列属性</span></button>
      <button><svg viewBox="0 0 24 24"><path d="M11 3v18M2 12h18M6 6q5 4 10 0M6 18q5-4 10 0" fill="none" stroke="#333" stroke-width="2"/><path d="M11 1l5 5H6zM11 23l5-5H6zM0 12l5-5v10zM22 12l-5-5v10z" fill="#333"/></svg><span>参数面板属性</span></button>
    </div>
    <b class="badge badge-1">1</b>
    <b class="badge badge-2">2</b>
  </div>
</div>
<script src="script.js"></script>
</body>
</html>
```
FILE: script.js
```js
// Fills the spreadsheet: a letter row, then 28 numbered rows of empty cells.
const grid = document.getElementById('grid');
const letters = ['A', 'B', 'C', 'D', 'E', 'F', 'G', 'H', 'I', ''];
const head = grid.createTHead().insertRow();
head.appendChild(document.createElement('th'));
letters.forEach((letter) => {
  const th = document.createElement('th');
  th.textContent = letter;
  head.appendChild(th);
});
const body = grid.createTBody();
for (let n = 1; n <= 28; n += 1) {
  const row = body.insertRow();
  const th = document.createElement('th');
  th.textContent = n;
  row.appendChild(th);
  letters.forEach(() => row.insertCell());
}
```
FILE: styles.css
```css
* { box-sizing: border-box; }
html, body { height: 100%; margin: 0; }
body {
  padding: 2px 1px 1px 0;
  background: #f0efec;
  color: #111;
  font: 18px/22px "Noto Sans CJK SC", sans-serif;
  overflow: hidden;
}
.defs { position: absolute; width: 0; height: 0; }
h2, h3, p, ul { margin: 0; padding: 0; font: inherit; }
ul { list-style: none; }
svg { display: block; flex: none; }
button { display: flex; align-items: center; justify-content: center; padding: 0; border: 0; background: none; color: inherit; font: inherit; }
input, select { min-width: 0; font: inherit; color: inherit; }
.m { font-family: "Liberation Mono", monospace; font-size: 15px; white-space: pre; }
.flip { transform: scaleX(-1); }
.sep { width: 1px; height: 24px; background: #dcdce0; flex: none; }

/* red frames and numbered steps */
.marked { position: relative; }
.marked::after { content: ""; position: absolute; inset: 0; border: 2px solid #fd2a2f; pointer-events: none; }
.badge {
  position: absolute;
  width: 44px;
  height: 44px;
  border-radius: 50%;
  background: #fd2a2f;
  color: #fff;
  font: 30px/44px "Liberation Sans", sans-serif;
  text-align: center;
  z-index: 5;
}

.app { position: relative; display: flex; flex-direction: column; height: 100%; border: 1px solid #a8a8aa; border-radius: 0 0 10px 10px; background: #f4f4f7; overflow: hidden; }

.menubar { display: flex; align-items: center; height: 35px; background: #e0e0e2; flex: none; }
.menus { display: flex; gap: 43px; padding-left: 37px; flex: 1; }
.menus button { height: 35px; padding-bottom: 4px; }
.menus .current::after { inset: -2px -14px -4px -32px; z-index: 6; }
.log { margin-right: 26px; white-space: nowrap; }
.tool-search { margin-right: 17px; }
.tool-bell { margin-right: 11px; }
.user { width: 154px; height: 35px; background: #b8dcf4; }

.workspace { display: grid; grid-template-columns: 434px 15px 1fr 59px 368px; flex: 1; min-height: 0; }

/* left side */
.left { display: flex; flex-direction: column; min-height: 0; }
.left-tools { display: flex; align-items: center; gap: 16px; height: 34px; padding-left: 11px; border-bottom: 2px solid #dedee1; }
.pane { display: flex; justify-content: space-between; overflow: hidden; flex: none; }
.files { height: 487px; padding-top: 1px; }
.tree li { display: flex; align-items: center; height: 27px; }
.tree .arrow { width: 7px; height: 12px; margin: 0 16px 0 8px; color: #a8a8a8; }
.tree .arrow-d { width: 12px; height: 7px; margin: 0 15px 0 5px; color: #a8a8a8; }
.tree .fold { width: 22px; height: 18px; margin-right: 5px; }
.tree .db { width: 18px; height: 22px; margin-right: 8px; }
.tree span { height: 27px; line-height: 26px; padding: 0 1px; }
.tree .lat { line-height: 29px; font-family: "Liberation Mono", monospace; font-size: 15px; }
.tree .sel { background: #419bf9; color: #fff; }
.tree .col { padding-left: 61px; gap: 6px; }
.tree .col svg { width: 22px; height: 10px; }
.vbar { width: 15px; padding: 1px 2px; background: #fff; }
.vbar i { display: block; height: 100%; border-radius: 6px; background: #e6e6e8; }
.hbar { height: 14px; padding: 1px 0; background: #fff; flex: none; }
.hbar i { display: block; width: 400px; height: 12px; border-radius: 6px; background: #e8e8ea; }
.hsplit { display: flex; align-items: center; justify-content: space-between; height: 15px; padding: 0 22px; background: #e8e8e8; color: #aaa; flex: none; }
.hsplit svg { width: 14px; height: 8px; }
.hsplit .up { transform: scaleY(-1); }
.data-tools { display: flex; align-items: center; gap: 13px; height: 35px; padding-left: 13px; border-bottom: 2px solid #dedee1; flex: none; }
.data-tabs { display: flex; align-items: center; height: 38px; padding: 0 0 2px 62px; margin-right: 2px; background: linear-gradient(90deg, #efeff2 217px, #d8dade 217px); flex: none; }
.data { flex: 1; padding-top: 8px; margin-bottom: 44px; }
.data .vbar { padding: 2px 2px 12px; }

.vsplit { display: flex; flex-direction: column; align-items: flex-start; padding: 18px 0 0 2px; background: #e8e8e8; color: #aaa; }
.vsplit i { width: 5px; height: 10px; margin: 546px 0 0 2px; border: solid #aaa; border-width: 0 2px; }

/* main column */
.main { display: flex; flex-direction: column; min-width: 0; min-height: 0; }
.top { display: flex; height: 79px; flex: none; }
.preview { align-items: flex-start; justify-content: flex-start; width: 90px; padding: 10px 0 0 22px; background: linear-gradient(#dcdce0, #dcdce0) 77px 10px / 1px 62px no-repeat; }
.top-rows { flex: 1; min-width: 0; }
.tools { display: flex; align-items: center; gap: 14px; height: 38px; padding: 0 0 2px 4px; }
.tools button { width: 26px; }
.tools .sep { margin-right: -2px; }
.tools .theme { width: auto; gap: 5px; white-space: nowrap; }
.tabs { display: flex; height: 41px; background: #e0e0e2; color: #444; }
.newtab { width: 39px; background: #dcdcdf; }
.tab { display: flex; align-items: center; width: 361px; padding: 0 10px 0 8px; gap: 10px; background: #d7d9dd; border-right: 1px solid #cfcfd3; }
.tab .name { flex: 1; }
.tab.active { width: 360px; background: #f4f4f7; }
.tablist { margin: 0 16px 0 auto; }

.combo { position: relative; display: flex; height: 30px; border: 2px solid #e0e0e3; background: #fff; }
.combo select { width: 100%; padding: 0 8px; border: 0; appearance: none; background: linear-gradient(#d8d9dd, #d8d9dd) right / 28px 100% no-repeat; }
.combo svg { position: absolute; right: 7px; top: 9px; width: 14px; height: 8px; pointer-events: none; }
.combo.font { width: 218px; margin: 0 6px; }
.combo.size { width: 82px; }
.combo.size select { padding: 0 5px; }

.format { display: flex; align-items: center; height: 39px; flex: none; }
.format .sep { margin: 0 3px; }
.group { display: flex; align-items: center; height: 30px; color: #333; }
.biu { margin-left: 2px; }
.biu button { width: 40px; }
.b { font: bold 18px/22px "DejaVu Sans", sans-serif; }
.it { font: italic bold 19px/22px "Liberation Serif", serif; }
.u { font: bold 18px/20px "Liberation Sans", sans-serif; text-decoration: underline; text-underline-offset: 3px; }
.al { padding: 0 4px; }
.al button { width: 34px; }
.drops { gap: 17px; padding: 0 10px 0 6px; }
.drops button { width: 43px; justify-content: space-between; }
.caret { width: 9px; height: 7px; }
.fa { width: 24px; height: 26px; border-bottom: 6px solid #000; font: bold 22px/18px "Liberation Sans", sans-serif; text-align: center; }
.cells button { width: 39px; }
.last { padding-left: 2px; }
.ab { font: bold 17px/22px "Open Sans", sans-serif; }
.fx { font: 22px/24px "Liberation Serif", serif; }
.fx small { font: bold 16px/24px "Liberation Serif", serif; }

.canvas { position: relative; display: flex; flex-direction: column; flex: 1; min-height: 0; background: #b1b1b1; }
.ruler {
  height: 27px;
  border-bottom: 2px solid #8c8c8c;
  background:
    repeating-linear-gradient(90deg, transparent 0 44px, #909090 44px 45px, transparent 45px 75px) 0 9px / 100% 9px no-repeat,
    repeating-linear-gradient(90deg, transparent 0 14px, #909090 14px 15px) 0 18px / 100% 7px no-repeat;
  flex: none;
}
.param-area { height: 119px; flex: none; }
.param-edge { height: 15px; background: #dadadc; flex: none; }
.sheet-wrap { display: flex; flex: 1; min-height: 0; background: #f4f4f7; }
.sheet { position: relative; flex: 1; overflow: hidden; background: #fff; }
.sheet table { width: 100%; border-collapse: separate; border-spacing: 0; table-layout: fixed; }
.sheet th, .sheet td { width: 108px; height: 28px; padding: 0; border: solid #c4c4c6; border-width: 0 1px 1px 0; }
.sheet tr > :first-child { width: 38px; }
.sheet tr > :last-child { width: auto; border-right: 0; }
.sheet thead th, .sheet tr:nth-child(even) > * { height: 29px; }
.sheet th { font: 18px/22px "Noto Sans CJK SC", sans-serif; text-align: center; }
.page-edge { position: absolute; left: 1009px; top: 28px; bottom: 0; width: 2px; background: repeating-linear-gradient(#222 0 12px, transparent 12px 18px, #222 18px 21px, transparent 21px 27px); }
.sheet-bar { display: flex; flex-direction: column; width: 25px; }
.sheet-bar button { height: 25px; background: #fff; }
.sheet-bar svg, .sheet-hbar svg { width: 14px; height: 8px; }
.sheet-bar i { flex: 1; margin: 1px 1px 30px; background: #e0e0e1; }
.flipv { transform: scaleY(-1); }
.sheet-hbar { display: flex; justify-content: space-between; height: 25px; flex: none; }
.sheet-hbar button { width: 24px; background: #fff; }
.sheet-hbar i { flex: 1; margin: 1px 106px 1px 1px; background: #e0e0e1; }
.rot-l { transform: rotate(90deg); }
.rot-r { transform: rotate(-90deg); }
.status { display: flex; align-items: center; height: 30px; flex: none; }
.status > button + button { margin-left: 10px; }
.status .sheet-tab { width: 100px; height: 30px; margin-right: 10px; gap: 8px; background: #fff; color: #444; }
.grow { flex: 1; }
.pg { width: 26px; color: #999; }
.status > .zo { width: 16px; margin: 0 12px 0 17px; }
.zi { width: 16px; margin: 0 12px 0 20px; }
.status input[type="range"] { width: 320px; height: 20px; margin: 0; appearance: none; background: linear-gradient(#dcdcde, #dcdcde) center / 100% 2px no-repeat; }
.status input[type="range"]::-webkit-slider-thumb { appearance: none; width: 6px; height: 18px; border-radius: 3px; background: #333; }
.zoom { width: 52px; height: 30px; padding: 0 5px; border: 2px solid #e0e0e3; background: #fff; font: 18px/22px "Liberation Sans", sans-serif; }
.status label { width: 21px; padding-left: 6px; font: bold 14px/20px "Liberation Mono", monospace; }

/* dialog */
.dialog { position: absolute; inset: 1px 88px 82px 3px; display: flex; flex-direction: column; border: 1px solid #8e8e90; border-radius: 10px; background: #f4f4f7; box-shadow: 0 0 0 1px #a0a0a2; z-index: 2; }
.dlg-title { display: flex; align-items: center; justify-content: space-between; height: 38px; padding: 0 17px 3px 6px; border-radius: 9px 9px 0 0; background: #f9f1ed; flex: none; }
.dlg-body { display: flex; flex: 1; min-height: 0; margin: 2px 5px 0 6px; border: 2px solid #b4b6ac; }
.params { position: relative; display: flex; flex-direction: column; width: 269px; border-right: 1px solid #dcdcdf; }
.param-tools { display: flex; align-items: center; height: 34px; flex: none; }
.param-tools button { width: 39px; height: 34px; }
.param-tools .marked { margin-left: 2px; }
.param-tools .marked::after { inset: -2px 0; }
.param-list { position: relative; flex: 1; background: #fff; }
.param-list ul { padding: 4px 2px 1px 5px; }
.param-list ul::after { inset: 0 -1px -2px 0; }
.param-list li { display: flex; align-items: center; gap: 1px; height: 27px; }
.param-list li svg { width: 21px; height: 24px; }
.param-list li span { flex: 1; height: 27px; font: 15px/29px "Liberation Mono", monospace; }
.param-list .on span { background: #419bf9; color: #fff; }
.badge-3 { left: -44px; top: -5px; }
.badge-4 { left: 99px; top: 118px; }
.dlg-split { display: flex; flex-direction: column; gap: 8px; width: 10px; padding: 2px 0 0 2px; border-right: 2px solid #a8a8a8; color: #777; }
.dlg-split svg { width: 6px; height: 10px; }
.detail { display: grid; grid-template-columns: 94px 503px; grid-auto-rows: 29px; row-gap: 16px; align-items: center; padding: 15px 0 0 29px; }
.detail label { white-space: nowrap; }
.detail input { height: 29px; padding: 0 5px; border: 2px solid #e0e0e3; background: #fff; font: 18px/22px Roboto, sans-serif; }
.def { display: flex; gap: 11px; }
.def button { position: relative; flex-direction: column; align-items: flex-start; width: 22px; }
.def button span { font: 11px/12px "Liberation Sans", sans-serif; }
.def .mini { position: absolute; right: -7px; bottom: 0; width: 7px; height: 5px; }
.def input { flex: 1; }
.dialog footer { position: relative; display: flex; justify-content: flex-end; gap: 14px; height: 41px; padding: 6px 21px 6px 0; flex: none; }
.dialog footer button { width: 66px; height: 29px; border: 2px solid #e3e3e6; background: #fff; }
.dialog footer .marked::after { inset: -4px -5px; }
.dialog footer .badge { right: 171px; top: -4px; }

/* right side */
.strip { display: flex; flex-direction: column; align-items: center; gap: 6px; padding-top: 4px; background: #e8e8e8; color: #999; }
.strip button { width: 48px; height: 42px; }
.strip .fold-btn { height: 34px; margin-bottom: -1px; padding-top: 8px; }
.strip .active { background: #f4f4f7; }
.right-head { display: flex; align-items: center; justify-content: space-between; height: 41px; padding: 0 8px 2px 15px; border-bottom: 2px solid #dcdcdf; }
.right-row { display: flex; align-items: center; padding: 18px 21px 0 15px; }
.right-row label { width: 99px; }
.right-row .combo { flex: 1; }

/* open menu */
.popup { position: absolute; left: 86px; top: 35px; width: 317px; height: 876px; padding: 6px 14px 0 8px; border: solid #cbcbcf; border-width: 1px 2px 2px 1px; background: #e0e0e2; z-index: 4; }
.popup h3 { display: flex; align-items: center; gap: 7px; height: 30px; color: #444; }
.popup h3::after { content: ""; flex: 1; height: 2px; margin: 7px 5px 0 0; background: #555; }
.items { display: grid; grid-auto-rows: 1fr; }
.g11 { height: 346px; }
.g4 { height: 126px; }
.g1 { height: 31px; }
.g3 { height: 93px; }
.items button { justify-content: flex-start; padding-left: 6px; }
.items button > svg { width: 24px; height: 24px; margin-right: 8px; }
.items button > span { flex: 1; height: 30px; padding-left: 6px; line-height: 28px; text-align: left; white-space: nowrap; }
.items .picked > span { position: relative; background: #419bf9; color: #fff; border-radius: 2px; }
.picked > span::after { content: ""; position: absolute; inset: -2px -1px -1px -2px; border: 2px solid #fd2a2f; }
.items kbd { margin-right: 24px; font: 14px/20px "Liberation Sans", sans-serif; }
.popup hr { height: 13px; margin: 0 5px 0 39px; border: 0; background: repeating-linear-gradient(90deg, #999 0 4px, transparent 4px 6px) 0 8px / 100% 2px no-repeat; }
.badge-1 { left: 17px; top: 3px; }
.badge-2 { left: 123px; top: 260px; }
```
